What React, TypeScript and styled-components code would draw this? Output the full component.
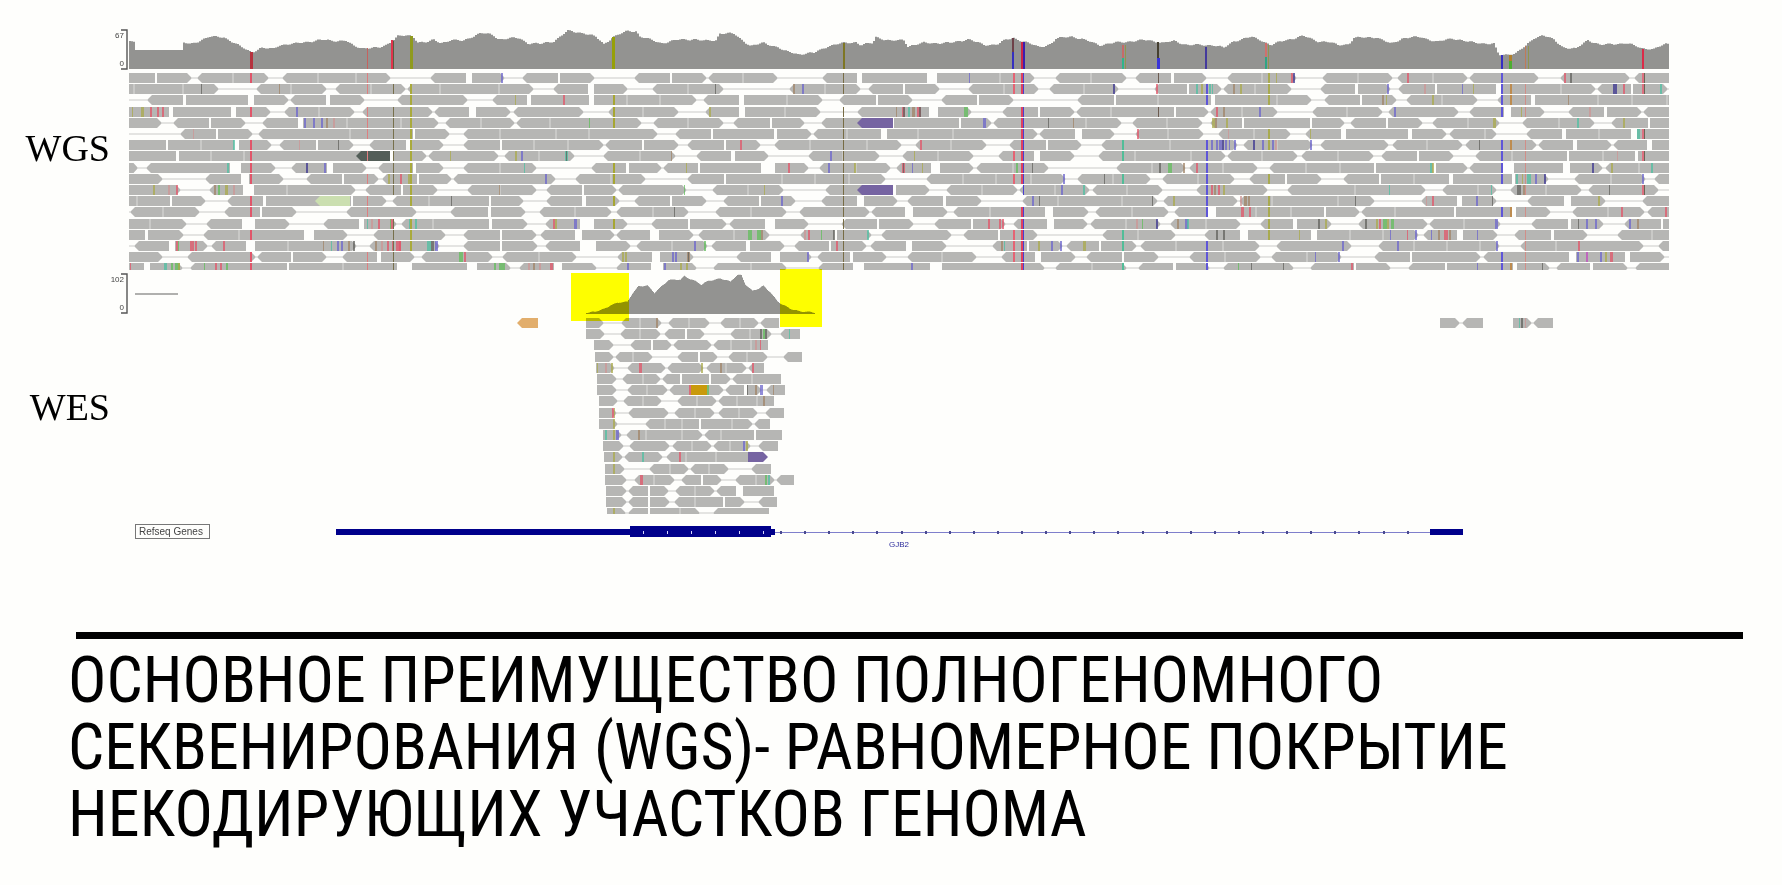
import React from "react";
import styled, { createGlobalStyle } from "styled-components";

const GlobalStyle = createGlobalStyle`
  body {
    margin: 0;
    background: #fefefc;
    color: #000;
  }
`;

const Page = styled.main`
  padding: 24px 0 24px;
`;

const Tracks = styled.figure`
  display: grid;
  grid-template-columns: 110px minmax(0, 1fr);
  margin: 0 113px 0 0;
`;

const TrackName = styled.div<{ $drop?: boolean }>`
  display: flex;
  align-items: center;
  justify-content: flex-end;
  padding-top: ${(p) => (p.$drop ? "22px" : "0")};
  font: 38px/44px "Liberation Serif", serif;
`;

const Plot = styled.svg`
  display: block;
  grid-column: 2;
  width: 100%;
  height: auto;
  overflow: visible;
  font-family: "Liberation Sans", sans-serif;
`;

const GenePlot = styled(Plot)`
  grid-row: 3;
`;

const GeneTrackName = styled.div`
  grid-column: 2;
  grid-row: 3;
  justify-self: start;
  align-self: start;
  box-sizing: border-box;
  width: 75px;
  margin: 4px 0 0 25px;
  padding-left: 3px;
  border: 1px solid #777;
  color: #444;
  font: 10px/13px "Liberation Sans", sans-serif;
`;

const Highlight = styled.rect`
  fill: #ffff00;
  mix-blend-mode: multiply;
`;

const Divider = styled.hr`
  height: 7px;
  margin: 82px 39px 0 76px;
  border: 0;
  background: #000;
`;

const Title = styled.h1`
  margin: 8px 68px 0;
  font: 400 64px/67px "Roboto Condensed", "Liberation Sans Narrow", "Open Sans Condensed", sans-serif;
`;

const READ = "#b6b6b4";
const COVERAGE = "#939391";
const NAVY = "#00008b";
const PITCH = 11.2;
const HEIGHT = 10;
const TIP = 5;

const BASES: Record<string, string> = {
  r: "#e0566a",
  b: "#6c66cc",
  g: "#62bd5c",
  o: "#a9a94c",
  k: "#62625e",
  t: "#4fbfa2",
  n: "#a08468",
  d: "#3c3690",
  p: "#cc9696",
  m: "#c04cc0",
};

// Gaps between reads: "a" is a seam, "a=b" a flat gap, "a~b" a gap between facing arrow tips.
const WGS_ROWS = [
  "155=156 192~197 233 269~282 318 356 391~430 466=471 505~522 558=559 595~634 670=671 707~708 743 778~822 857=861 927=936 1000 1035~1055 1091 1127~1135 1171=1173 1207~1227 1262 1297~1322 1358 1393~1397 1433 1468~1469 1539~1560 1630~1634",
  "134 183 219~256 291 327~335 371 406~407 440 499 534~553 588=593 628~652 688 724~789 825 861~868 903=904 940~968 1004 1039~1049 1084 1119~1154 1187=1188 1222~1223 1255 1292~1320 1355=1357 1391~1398 1435=1436 1496=1500 1561 1596~1597 1631=1632 1668~1669",
  "129~147 183=185 248=253 289~290 326=329 365~397 468~492 527=530 589=593 627 660 697~703 739=743 787 823~839 876=877 913~941 977=978 1014~1077 1114=1115 1158 1211=1214 1277 1312~1324 1360=1361 1397~1406 1442 1478~1497 1531=1534 1598 1632 1667",
  "169=172 231=235 271~284 319 355~362 433~434 469=475 511~513 584~608 643 679~705 739=744 785 821~857 929=937 972~1002 1038=1039 1075~1076 1111 1174=1175 1209~1210 1242 1278~1312 1347 1383~1388 1459~1469 1504=1510 1545~1568 1604=1606 1642~1643",
  "162~173 209=210 246~262 298=302 347 401 439~445 481 515~516 550 642~653 688 724~733 770=771 805~821 893=893 959=960 992~993 1086 1122~1132 1167 1203~1210 1242=1243 1310=1311 1345~1350 1386=1387 1423~1432 1468 1500~1522 1559 1595~1611 1648=1649",
  "129~180 216=217 253~258 350 413=414 450~463 500 556 589 658~675 711=712 774=776 812~813 847 881=886 918 953 1038~1039 1075=1081 1115~1135 1168 1204~1218 1254 1291~1305 1341=1345 1408=1411 1447~1449 1485 1497~1526 1562=1565 1599 1631=1636",
  "166=167 201 234=238 272~279 316=317 354~369 406=410 444~463 500=501 534 568 604~605 642=643 679~687 724=725 761~774 810 867 902~915 951 987~1009 1046=1047 1082~1101 1170 1238~1243 1277 1313~1320 1389~1392 1427 1463~1465 1537~1538 1573=1576 1612~1613 1647=1651",
  "176=178 211 244 390=392 427~428 499~504 539 575~603 640 676~696 731=734 769~808 843 880~902 938 974~998 1034=1039 1075~1098 1135 1191 1226~1227 1262 1298~1301 1338 1374~1381 1417=1418 1454~1475 1512 1567=1568 1603 1635=1637",
  "138~146 230=240 276~291 327=332 367~378 413=415 444~463 500 537~591 626=628 662~663 698=699 761=774 809~819 856 891~896 931=939 974~976 1013 1049~1116 1152 1186~1189 1223 1258~1269 1306 1340 1374=1375 1433=1435 1468~1469 1502=1513 1563=1569 1603~1605 1639",
  "163~205 241=248 284~306 342=343 379~382 417=418 452~453 556~575 611 646~687 724=725 782 815 849 886~926 963 996 1031 1066~1077 1113 1151~1162 1198 1235~1249 1285=1286 1322~1343 1379=1380 1414 1449=1452 1512=1514 1549~1574 1611 1646~1654",
  "181~209 243=253 287 356~365 401=402 438~467 500 537~546 582=583 617~618 687~712 748 784~825 893=895 930~946 982 1018~1019 1055 1090~1092 1127 1163~1196 1268~1287 1355 1426~1442 1478 1497~1510 1546 1582~1588 1659~1669",
  "137 170=171 206~227 263=265 351=352 387~392 429 489=490 524~546 582=585 620~634 670=671 707~723 759=760 796~821 857=863 898~907 943=945 982~1022 1058 1122 1158~1163 1238~1239 1272 1338 1375~1421 1457=1461 1497~1527 1564=1570 1606~1642",
  "129~130 163 200~224 260=261 297~346 417~450 488=490 526~539 575 612~616 653 689~715 751 787~799 870~871 905=912 948~953 990 1045=1052 1089~1095 1132 1169~1174 1208=1215 1256 1291 1324=1325 1360~1361 1395 1454=1455 1512=1515 1551~1572 1608 1645~1647",
  "150 187~206 242=254 290~323 359=363 397~401 433 489=491 528~545 580=593 628~651 688=689 727~729 765=774 809~841 877=878 914~934 971=972 1006~1013 1047=1053 1088~1090 1126 1161~1170 1206 1241~1260 1293=1296 1332~1358 1428~1429 1464 1501~1531 1568=1570 1604~1624 1661=1662",
  "145=147 184~203 239 304=313 348~373 446~463 500=501 537~540 575=581 615~616 650=658 694~698 734 770~800 834=836 872~881 952~963 998=999 1038~1102 1138 1176~1204 1240=1247 1311=1316 1350 1383 1419~1423 1457=1462 1498~1514 1551=1553 1588~1617 1652",
  "129~134 169=174 208~211 246=254 288 357~369 440~463 500=501 538~545 580=595 631~636 672 708~711 746=749 785~794 829=830 867~870 906=911 947~992 1027=1028 1063~1066 1099=1100 1137~1140 1176 1223 1260~1276 1352~1378 1414 1447 1480 1500~1520 1556 1644~1658",
  "163~187 256~257 291=292 327~342 377=380 415~421 493~502 539 577~617 652=659 694~736 771=779 812~817 850=852 887~907 942 977~1001 1035=1040 1076~1086 1122=1123 1159~1189 1225 1261~1271 1307 1342~1374 1410=1411 1481~1483 1569=1575 1625=1629 1665~1669",
  "144=149 183~190 287=288 343 397=411 467=476 511~519 554=561 597~616 651=662 697~713 751 787~818 853=863 930=941 1045~1055 1092 1127~1138 1173=1175 1210~1223 1294~1310 1354=1355 1391~1408 1445=1446 1513=1516 1550~1556 1590=1592 1628~1635",
];

// Mismatched bases, "<x><base>" with an optional width after a colon.
const WGS_MARKS = [
  "501b 969b:1 1276o:1 1291r 1293d 1407r 1564r 1570k",
  "201k:1 279n:1 715k:1 793n 802b 1113d 1156r 1196t 1201o 1209t 1212t:1 1233n 1240o 1387b 1424p 1462b:1 1473o:1 1613d:4 1623r 1660t",
  "515o:1 563r 1382n 1386o:1 1432o 1568n:1",
  "132o:1 141o:3 150r 157r 162r 296b 709o 896n:1 902r:3 903k 908t 912n:3 917r:4 919k 964g:4 1216r 1223n 1259b 1394b 1521o:1 1589p",
  "304b 313b 321b 326n 333p 589g:1 983b:3 1048k:1 1073n:1 1212o:3 1215n 1226o 1493o:3 1577t 1623o",
  "193p:1 1137r 1228p:1 1310o:1 1637t:3",
  "233t 299p:1 338k:1 740r 920r 1211b 1216b 1219b:3 1222d 1225b 1229b:1 1234b 1253d 1262b 1272b 1275p 1310b 1479k:1",
  "450o:1 515o 521b 565t:3 566k:1 671n:1 830b 914o:1 1617p:1",
  "227t 306d 324b 524t:1 686o:1 788r 828b 854o 902r:3 903k:1 912b:1 922o:1 1016g 1032k:1 1159k 1168g:4 1183n 1196r 1430t 1432o 1592d 1611o 1651t",
  "388o 400r 408o 545b 1063b 1104k:1 1516t 1522o:1 1527t:4 1535b 1544d 1642b",
  "153o 168p 176r 214n 218g 225o:3 233p 499n:1 684g:1 764o:1 1061b 1083t 1211r 1214n 1218r 1223o 1389t:1 1491t:1 1517k:4 1523n 1609k:1",
  "451k:1 781b 1032b 1039k:1 1152k:1 1173o 1240p 1244n:3 1248n 1355k:1 1426p:1 1432r 1476b 1492k:1 1598o",
  "674k:1 1241r:3 1249r 1621r 1665r",
  "367t:1 371p 378r 391r:3 390g:1 409t:3 415t 553r 555o 574b:3 988r 999r 1002r 1136p 1142g:1 1156d 1177n 1185b:3 1187t 1318k 1325o 1365k 1376o 1379r 1383g:4 1387o 1391g:3 1495b:3 1578k:1 1586b 1595b 1629b 1637n",
  "748g:4 757g:4 761n 804p 808r 821g:1 833k 867t 1216k 1223k 1299o:1 1390b:1 1407r:1 1415b 1431b:1 1438n 1444r:4 1449n 1477b:1",
  "176r 178g:1 190r 192r 195r 223r 323n:1 331t:1 337b 341b 348n 353k 375n 381p 387r 392r 396r:5 399r 427t:4 431k:3 435b:3 694b 704g 836r 1001n 1004t:1 1038o 1051b 1060b 1083o:3 1342b 1397b 1496b 1578r",
  "459g:4 464r 622o 625o 672b 675b 687n:3 688k:1 807b 1315b:1 1338b 1577b 1586m 1600b 1605o 1610r:3",
  "130r:1 164t:3 171g 175g:5 178o 204g:1 215r 220r 226g 494g 499g:6 528p 533n 539p 550r:3 627b 664b 680o 686o 911b 1238g:1 1251k:1 1283k:1 1351r 1477b:1 1542k:1",
];

// Variants that recur at one position: x, colour, width, rows.
const VARIANTS: [number, string, number, number[]][] = [
  [250, "#e0566a", 2, [1, 4, 7, 8, 9, 10, 12, 13, 15, 17, 18]],
  [367, "#dd7f80", 1, [1, 2, 4, 5, 6, 8, 10, 12, 13, 17, 18]],
  [393, "#77704c", 1, [2, 4, 5, 6, 7, 8, 9, 10, 11, 14, 15, 16, 17, 18]],
  [410, "#a9aa3c", 2, [2, 3, 4, 5, 6, 7, 8, 9, 10, 11, 12, 14, 15, 16]],
  [613, "#a6a632", 2, [3, 4, 5, 9, 10, 12, 14]],
  [843, "#776c45", 1, [1, 2, 4, 5, 6, 7, 8, 9, 10, 11, 12, 13, 14, 15, 16, 17, 18]],
  [1013, "#e46474", 2, [1, 2, 8, 10, 15, 16, 17]],
  [1021, "#e0405e", 2, [1, 2, 4, 5, 6, 7, 8, 9, 10, 13, 14, 15, 16, 17, 18]],
  [1023, "#4a3fd0", 1, [1, 2, 4, 5, 6, 7, 8, 9, 10, 11, 13, 14, 15, 16, 17, 18]],
  [1122, "#52bd98", 2, [7, 8, 10, 15, 16, 18]],
  [1158, "#6c5b50", 1, [1, 4]],
  [1206, "#5f56d8", 2, [2, 3, 7, 8, 9, 10, 11, 12, 13, 16, 17, 18]],
  [1268, "#a8aa50", 2, [1, 2, 3, 6, 7, 10, 12, 13, 14, 15]],
  [1501, "#5f56d8", 2, [1, 2, 3, 4, 7, 8, 9, 10, 13, 17, 18]],
  [1510, "#bd8c50", 2, [2, 3, 7, 13, 18]],
  [1525, "#d08e88", 1, [2, 3, 4, 7, 8, 9, 10, 11, 13, 15, 16, 17, 18]],
  [1642, "#dd7080", 2, [1, 2, 6, 8, 11]],
  [1644, "#6b6656", 1, [1, 2, 6, 8, 11]],
];

const WGS_PROFILE =
  "129,41 134,43 135,50 182,50 183,43 190,44 200,40 208,37 223,37 230,41 240,47 251,52 260,48 272,49 278,45 293,44 303,42 323,40 345,41 353,46 362,48 378,48 385,45 392,40 397,36 412,36 417,42 428,42 433,40 440,43 450,40 462,41 470,37 480,33 492,35 498,39 518,38 527,43 540,44 553,41 567,31 583,33 595,37 603,44 612,37 627,31 636,31 638,36 650,40 660,43 677,40 693,39 703,41 716,40 718,33 733,34 740,39 750,46 763,43 777,47 783,51 797,54 813,53 827,46 843,43 855,42 860,45 872,43 875,37 890,41 903,40 907,46 923,43 950,43 967,39 983,45 997,44 1005,40 1013,38 1027,43 1038,47 1050,44 1055,39 1070,36 1080,39 1100,45 1120,42 1147,40 1163,43 1173,41 1187,45 1213,45 1223,48 1233,41 1250,37 1260,40 1270,45 1285,40 1302,36 1317,41 1327,42 1337,45 1348,44 1353,38 1375,37 1390,44 1402,38 1420,37 1437,42 1452,38 1467,42 1493,44 1498,55 1502,55 1515,53 1525,46 1533,38 1542,35 1553,40 1562,47 1575,49 1587,40 1600,45 1625,43 1640,48 1653,49 1665,44 1669,44";

const WES_PROFILE =
  "586,313 595,312 603,309 610,305 617,303 627,302 632,293 638,286 647,286 654,293 662,285 668,280 680,280 684,276 695,281 701,285 708,281 720,278 730,282 737,275 741,275 745,284 752,291 758,289 763,286 770,292 777,301 782,305 790,309 800,311 815,313";

// Stripes in the WGS coverage: x, top, bottom, width, colour.
const STRIPES: [number, number, number, number, string][] = [
  [250, 52, 69, 3, "#b5323e"],
  [367, 48, 69, 1, "#c5625f"],
  [391, 40, 69, 2, "#e0334d"],
  [393, 41, 69, 1, "#5c5c40"],
  [410, 36, 69, 3, "#8f9a1e"],
  [612, 37, 69, 3, "#96a008"],
  [843, 43, 69, 2, "#7e7624"],
  [1012, 38, 53, 2, "#6e4048"],
  [1012, 52, 69, 2, "#352fc0"],
  [1021, 42, 69, 2, "#cc2548"],
  [1023, 42, 69, 2, "#3a1fb0"],
  [1122, 45, 58, 2, "#c76a68"],
  [1122, 58, 69, 2, "#2fb58c"],
  [1125, 45, 69, 1, "#8f9650"],
  [1157, 42, 58, 2, "#453f30"],
  [1157, 58, 69, 3, "#3934d8"],
  [1205, 47, 69, 2, "#443a9c"],
  [1265, 43, 58, 2, "#d0706c"],
  [1265, 57, 69, 2, "#2fa584"],
  [1268, 45, 69, 1, "#8f9650"],
  [1501, 55, 69, 2, "#362cc4"],
  [1509, 55, 63, 3, "#b0802c"],
  [1509, 61, 69, 3, "#4cae30"],
  [1525, 46, 69, 1, "#c07a58"],
  [1528, 46, 69, 1, "#8f9650"],
  [1642, 49, 69, 2, "#dc2a48"],
];

// Start, gaps, end and mismatches of every WES row.
const WES_ROWS: [number, string, number, string][] = [
  [586, "604~621 640 662~668 689 710~720 740 759~760", 779, "656n"],
  [586, "605~620 640 661~664 685=686 705~730 750 772~780", 800, "760k 763g 765k 789t:1"],
  [594, "614~630 651=652 672~673 712~713 731 751", 768, "755p 760r:1"],
  [595, "614~615 633 653~677 698=699 718~728 747 768~783", 802, ""],
  [596, "615~627 666~667 704~706 726 747~748", 764, "597o:1 605p 611o 639r:3 701o 720n 752r"],
  [597, "617~622 643 661~662 680=681 709=710 731~732 752", 781, ""],
  [597, "617~627 647 668~669 724~725 744=746 762~766", 785, "689r 707g 747k:1 755n 760b:3 773n:1"],
  [599, "618~623 643 662~677 697 717~718 737 757", 774, "763n"],
  [599, "617~628 669~674 695 715~718 739 758~765", 784, "612r 614o:1"],
  [599, "618~645 665 682 699=700 732 753~754", 770, "613o"],
  [603, "622~626 646 682 703~704 721 754=755", 782, "605t 613o 616b:3 638n"],
  [603, "624~629 670~672 692 712~713 730 751~758", 778, "743b 746o"],
  [604, "623~624 663~666 686 716", 748, "613o 642t 679r"],
  [605, "625~649 670 689~690 709 729~751", 771, "613o"],
  [605, "627~634 654 675~681 701=702 722~735 756 775~776", 794, "640r:3 765g 768t"],
  [606, "627~628 648=649 669~675 695 715~716 736=742", 774, ""],
  [606, "627~628 648=649 670~674 695 723=724 745~758", 777, ""],
  [607, "626~628 648=649 680 700~713", 769, "613o"],
];

const rowTop = (first: number, row: number) => Math.round(first + row * PITCH);

function readPath(x1: number, x2: number, y: number, left: boolean, right: boolean) {
  const mid = y + HEIGHT / 2;
  const bottom = y + HEIGHT;
  const tip = Math.min(TIP, (x2 - x1) / 2);
  const l = left ? `M${x1 + tip} ${bottom}L${x1} ${mid}L${x1 + tip} ${y}` : `M${x1} ${bottom}V${y}`;
  const r = right ? `H${x2 - tip}L${x2} ${mid}L${x2 - tip} ${bottom}Z` : `H${x2}V${bottom}Z`;
  return l + r;
}

function layoutRow(start: number, gaps: string, end: number, y: number) {
  let reads = "";
  let mates = "";
  let seams = "";
  let x = start;
  let arrow = false;
  for (const token of gaps.split(" ")) {
    const facing = token.includes("~");
    const [a, b = a] = token.split(/[~=]/).map(Number);
    if (token.includes("=") || facing) {
      if (a > x) reads += readPath(x, a, y, arrow, facing);
      if (facing) mates += `M${a} ${y + 5}H${b}`;
      x = facing ? b : b + 1;
      arrow = facing;
    } else {
      seams += `M${a} ${y}V${y + HEIGHT}`;
    }
  }
  if (end > x) reads += readPath(x, end, y, arrow, false);
  return { reads, mates, seams };
}

function Row({ start, gaps, end, y, marks }: { start: number; gaps: string; end: number; y: number; marks: string }) {
  const { reads, mates, seams } = layoutRow(start, gaps, end, y);
  return (
    <g>
      <path d={mates} stroke="#e4e4e2" strokeWidth="2" />
      <path d={reads} fill={READ} />
      <path d={seams} stroke="#dcdcda" />
      {marks
        .split(" ")
        .filter(Boolean)
        .map((mark) => {
          const [spot, width = "2"] = mark.split(":");
          const base = spot.slice(-1);
          return (
            <rect key={mark} x={parseInt(spot, 10)} y={y} width={width} height={HEIGHT} fill={BASES[base]} opacity="0.75" />
          );
        })}
    </g>
  );
}

// Coverage drawn as narrow bins, each up to a pixel off the smooth profile.
function coveragePath(profile: string, base: number, bin: number, noise: number) {
  const points = profile.split(" ").map((p) => p.split(",").map(Number));
  const last = points[points.length - 1][0];
  let d = `M${points[0][0]} ${base}`;
  let k = 0;
  for (let x = points[0][0]; x < last; x += bin) {
    while (k < points.length - 2 && points[k + 1][0] <= x) k++;
    const [x1, y1] = points[k];
    const [x2, y2] = points[k + 1];
    const wobble = y1 === y2 && x2 - x1 > 30 ? 0 : (Math.sin(x * 0.55) + Math.sin(x * 0.23)) * noise;
    const y = Math.min(base - 1, y1 + ((y2 - y1) * (x - x1)) / (x2 - x1) + wobble);
    d += `V${y.toFixed(1)}H${Math.min(x + bin, last)}`;
  }
  return `${d}V${base}Z`;
}

function Axis({ top, bottom, max }: { top: number; bottom: number; max: string }) {
  return (
    <g>
      <path d={`M121 ${top}H127V${bottom}H121`} fill="none" stroke="#555" strokeWidth="1.4" />
      <g fontSize="8" fill="#444" textAnchor="end">
        <text x="124" y={top + 8}>{max}</text>
        <text x="124" y={bottom - 3}>0</text>
      </g>
    </g>
  );
}

function WgsTrack() {
  return (
    <Plot viewBox="110 24 1559 248" role="img" aria-label="WGS">
      <clipPath id="wgs-reads">
        <rect x="129" y="72" width="1540" height="198" />
      </clipPath>
      <Axis top={30} bottom={69} max="67" />
      <path d={coveragePath(WGS_PROFILE, 69, 2, 0.6)} fill={COVERAGE} />
      {STRIPES.map(([x, top, bottom, width, fill]) => (
        <rect key={`${x}-${top}`} x={x} y={top} width={width} height={bottom - top} fill={fill} />
      ))}
      <g clipPath="url(#wgs-reads)">
        {WGS_ROWS.map((gaps, i) => (
          <Row key={i} start={129} gaps={gaps} end={1669} y={rowTop(73, i)} marks={WGS_MARKS[i]} />
        ))}
        <path d={readPath(356, 390, rowTop(73, 7), true, false)} fill="#535e58" />
        <path d={readPath(315, 350, rowTop(73, 11), true, false)} fill="#cbdfb0" />
        <path d={readPath(857, 893, rowTop(73, 4), true, false)} fill="#7664a2" />
        <path d={readPath(857, 893, rowTop(73, 10), true, false)} fill="#7664a2" />
        {VARIANTS.map(([x, fill, width, rows]) =>
          rows.map((row) => (
            <rect key={`${x}-${row}`} x={x} y={rowTop(73, row - 1)} width={width} height={HEIGHT} fill={fill} />
          ))
        )}
      </g>
    </Plot>
  );
}

function WesTrack() {
  const y = 318;
  return (
    <Plot viewBox="110 272 1559 248" role="img" aria-label="WES">
      <clipPath id="wes-reads">
        <rect x="500" y="316" width="1169" height="198" />
      </clipPath>
      <Axis top={274} bottom={313} max="102" />
      <path d="M135 294H178" stroke="#b0b0ae" strokeWidth="2" />
      <path d={coveragePath(WES_PROFILE, 314, 1, 0.4)} fill={COVERAGE} />
      <g clipPath="url(#wes-reads)">
        {WES_ROWS.map(([start, gaps, end, marks], i) => (
          <Row key={i} start={start} gaps={gaps} end={end} y={rowTop(y, i)} marks={marks} />
        ))}
        <path d={readPath(517, 538, y, true, false)} fill="#e2ae6c" />
        <rect x="691" y={rowTop(y, 6)} width="16" height={HEIGHT} fill="#c99a0c" />
        <path d={readPath(748, 768, rowTop(y, 12), false, true)} fill="#7664a2" />
        <Row start={1440} gaps="1460~1462" end={1483} y={y} marks="" />
        <Row start={1513} gaps="1532~1533" end={1553} y={y} marks="1519t:1 1521k 1525p:1" />
      </g>
      <Highlight x="571" y="273" width="58" height="48" />
      <Highlight x="780" y="269" width="42" height="58" />
    </Plot>
  );
}

function GeneTrack() {
  const introns = Array.from({ length: 27 }, (_, i) => Math.round(780 + i * 24.1));
  const codons = [643, 667, 691, 715, 739, 763];
  return (
    <GenePlot viewBox="110 520 1559 30" role="img" aria-label="GJB2">
      <path d="M775 532.500H1430" stroke="#7f7fcc" />
      {introns.map((x) => (
        <rect key={x} x={x} y="531" width="2" height="3" fill="#4a4a90" />
      ))}
      <rect x="336" y="529" width="439" height="6" fill={NAVY} />
      <rect x="630" y="526" width="141" height="11" fill={NAVY} />
      <rect x="1430" y="529" width="33" height="6" fill={NAVY} />
      {codons.map((x) => (
        <rect key={x} x={x} y="531" width="1" height="3" fill="#d8d8ff" />
      ))}
      <text x="899" y="547" fontSize="8" fill="#2c2c9c" textAnchor="middle">GJB2</text>
    </GenePlot>
  );
}

export default function App() {
  return (
    <Page>
      <GlobalStyle />
      <Tracks>
        <TrackName>WGS</TrackName>
        <WgsTrack />
        <TrackName $drop>WES</TrackName>
        <WesTrack />
        <GeneTrack />
        <GeneTrackName>Refseq Genes</GeneTrackName>
      </Tracks>
      <Divider />
      <Title>ОСНОВНОЕ ПРЕИМУЩЕСТВО ПОЛНОГЕНОМНОГО СЕКВЕНИРОВАНИЯ (WGS)- РАВНОМЕРНОЕ ПОКРЫТИЕ НЕКОДИРУЮЩИХ УЧАСТКОВ ГЕНОМА</Title>
    </Page>
  );
}
